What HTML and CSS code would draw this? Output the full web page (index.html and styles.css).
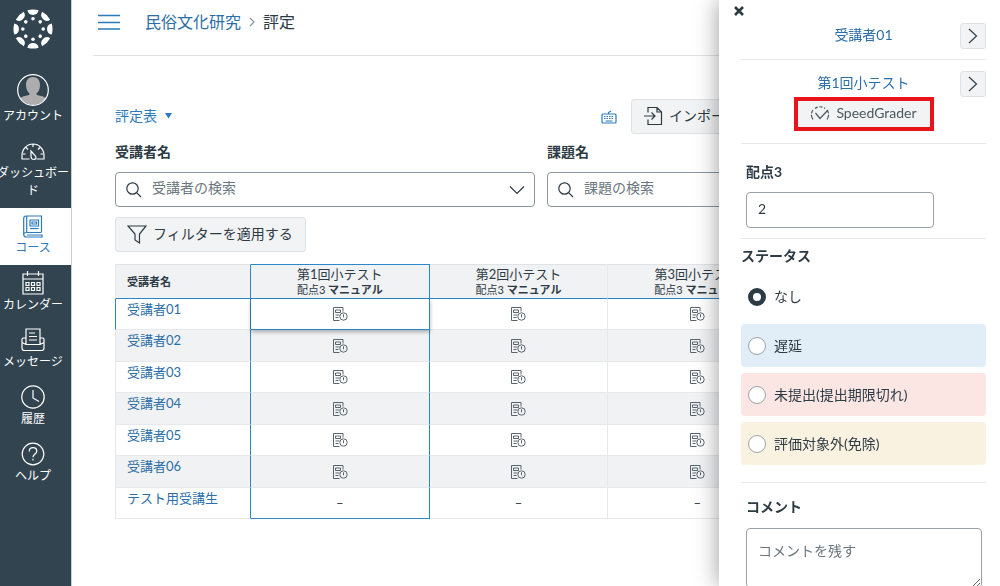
FILE: index.html
```html
<!DOCTYPE html>
<html lang="ja">
<head>
    <meta charset="UTF-8">
    <meta name="viewport" content="width=device-width, initial-scale=1.0">
    <title>評定表</title>
    <link rel="stylesheet" href="styles.css">
</head>
<body>

    <!-- Shared icons -->
    <svg class="sprite" aria-hidden="true">
        <symbol id="icon-search" viewBox="0 0 16 16">
            <circle cx="6.5" cy="6.5" r="5.7"/><path d="M10.6 10.6L15 15"/>
        </symbol>
        <symbol id="icon-next" viewBox="0 0 10 16">
            <path d="M1 1l7.5 7L1 15"/>
        </symbol>
        <symbol id="icon-quiz" viewBox="0 0 16 16">
            <path d="M7.5 14.500H1.500V1.500h9.500v4M3.500 4h5v2.500h-5zM3.500 9h4M3.500 11.500h3"/>
            <circle cx="11.5" cy="10.5" r="3.700"/><path d="M11.500 8.300v3"/>
        </symbol>
    </svg>

    <div class="app">
        <nav class="sidebar">
            <a href="#" class="logo" aria-label="Canvas">
                <svg viewBox="-20 -20 40 40" width="40" height="40">
                    <defs>
                        <g id="logo-part">
                            <path d="M-5.6 -18.7A19.5 19.5 0 0 1 5.6 -18.7A5.7 5.7 0 0 1 -5.6 -18.7Z"/>
                            <circle cx="0" cy="-10.2" r="1.8"/>
                        </g>
                    </defs>
                    <use href="#logo-part"/>
                    <use href="#logo-part" transform="rotate(45)"/>
                    <use href="#logo-part" transform="rotate(90)"/>
                    <use href="#logo-part" transform="rotate(135)"/>
                    <use href="#logo-part" transform="rotate(180)"/>
                    <use href="#logo-part" transform="rotate(225)"/>
                    <use href="#logo-part" transform="rotate(270)"/>
                    <use href="#logo-part" transform="rotate(315)"/>
                </svg>
            </a>
            <a href="#" class="nav-item">
                <svg class="avatar" viewBox="0 0 32 32" width="32" height="32">
                    <defs><clipPath id="avatar-clip"><circle cx="16" cy="16" r="15"/></clipPath></defs>
                    <g clip-path="url(#avatar-clip)">
                        <path class="avatar-person" d="M16 3c4.500 0 7 3 7 8 0 4-1.500 7-3.500 8.500 0 1.500.5 1.500 5 2.500 4 1 6.500 3 7.500 10H0c1-7 3.500-9 7.500-10 4.500-1 5-1 5-2.500C10.500 18 9 15 9 11c0-5 2.500-8 7-8z"/>
                    </g>
                    <circle cx="16" cy="16" r="15.300"/>
                </svg>
                <span>アカウント</span>
            </a>
            <a href="#" class="nav-item">
                <svg viewBox="0 0 24 24" width="24" height="24">
                    <path d="M8.500 20H1v-3.500C1 10 6 5 12 5s11 5 11 11.500V20h-7.500M12 5v3M5 8.500l2 2M19 8.500l-2 2M2 15h2.500M19.500 15H22"/>
                    <path d="M10 12l4.500 5c1 1.500.3 3.500-1.500 3.500s-2.800-1-3-2.800z"/>
                </svg>
                <span>ダッシュボー<br>ド</span>
            </a>
            <a href="#" class="nav-item active">
                <svg viewBox="0 0 24 24" width="24" height="24">
                    <path d="M20 18.500H5.500c-2 0-2.800 1-2.800 2s.8 2.500 2.800 2.500H21v-2H6M20.500 18.500V2H5C3.500 2 2.700 3 2.700 4.500v16M5.700 2v16.500M9 6h8.500v6H9zM11 8h4.500v2H11z"/>
                    <path d="M9 14.500h8.500"/>
                </svg>
                <span>コース</span>
            </a>
            <a href="#" class="nav-item">
                <svg viewBox="0 0 24 24" width="24" height="24">
                    <path d="M2 3h20v20H2zM2 8h20M6.500 0v5M17.500 0v5M5 11.500h3v3H5zM10.500 11.500h3v3h-3zM16 11.500h3v3h-3zM5 16.500h3v3H5zM10.500 16.500h3v3h-3zM16 16.500h3v3h-3z"/>
                </svg>
                <span>カレンダー</span>
            </a>
            <a href="#" class="nav-item">
                <svg viewBox="0 0 24 24" width="24" height="24">
                    <path d="M5 16V1h14v15M8 5h6M8 8.500h8M8 12h8M5 10H2l-1 1v9c0 1.500 1 2.500 2.500 2.500h17c1.500 0 2.500-1 2.500-2.500v-9l-1-1h-3M1 14.500l4 2h14l4-2"/>
                </svg>
                <span>メッセージ</span>
            </a>
            <a href="#" class="nav-item">
                <svg viewBox="0 0 24 24" width="24" height="24">
                    <circle cx="12" cy="12" r="11.200"/><path d="M12 5v8l6 3.500"/>
                </svg>
                <span>履歴</span>
            </a>
            <a href="#" class="nav-item">
                <svg viewBox="0 0 24 24" width="24" height="24">
                    <circle cx="12" cy="12" r="10.800"/><path d="M8.300 9.500C8.300 7 10 5.700 12 5.700S15.800 7 15.800 9.200c0 2.800-3.800 2.800-3.800 6M12 16.800v1.700"/>
                </svg>
                <span>ヘルプ</span>
            </a>
        </nav>

        <main class="content">
            <header class="page-header">
                <button class="menu-button" aria-label="メニュー">
                    <svg viewBox="0 0 24 16" width="24" height="16"><path d="M1 1.500h22M1 8.500h22M1 15h22"/></svg>
                </button>
                <a href="#">民俗文化研究</a>
                <svg class="crumb-arrow" viewBox="0 0 6 10" width="6" height="10"><path d="M1 1l4 4-4 4"/></svg>
                <span>評定</span>
            </header>

            <div class="gradebook">
                <div class="toolbar">
                    <button class="view-menu">評定表
                        <svg viewBox="0 0 8 6" width="8" height="6"><path d="M0 0h7L3.500 5.500z"/></svg>
                    </button>
                    <div class="toolbar-actions">
                        <button class="keyboard-button" aria-label="キーボードショートカット">
                            <svg viewBox="0 0 16 14" width="16" height="14">
                                <rect x="1" y="4" width="14" height="9" rx="1"/>
                                <path d="M3 6.500h10M3 8.500h10" stroke-dasharray="1.500 1"/><path d="M4.500 11h7M7.500 4V2.500L10 1"/>
                            </svg>
                        </button>
                        <button class="button">
                            <svg viewBox="0 0 20 20" width="20" height="20">
                                <path d="M5 6.500V1.500h9l4.500 4.500v12.500H5v-5M14 1.500V6h4.500M1 10h10.500M8.500 6.500L12 10l-3.500 3.500"/>
                            </svg>
                            インポート
                        </button>
                    </div>
                </div>

                <div class="search-row">
                    <div class="field">
                        <label for="student-search">受講者名</label>
                        <div class="search-box">
                            <svg width="16" height="16"><use href="#icon-search"/></svg>
                            <input type="text" id="student-search" placeholder="受講者の検索">
                            <svg viewBox="0 0 16 10" width="16" height="10"><path d="M1 1.500l7 7 7-7"/></svg>
                        </div>
                    </div>
                    <div class="field">
                        <label for="assignment-search">課題名</label>
                        <div class="search-box">
                            <svg width="16" height="16"><use href="#icon-search"/></svg>
                            <input type="text" id="assignment-search" placeholder="課題の検索">
                            <svg viewBox="0 0 16 10" width="16" height="10"><path d="M1 1.500l7 7 7-7"/></svg>
                        </div>
                    </div>
                </div>

                <button class="button">
                    <svg viewBox="0 0 20 20" width="20" height="20">
                        <path d="M1 2h18l-6.500 8v9L8 16v-6z"/>
                    </svg>
                    フィルターを適用する
                </button>

                <table class="grades">
                    <thead>
                        <tr>
                            <th class="name">受講者名</th>
                            <th class="selected"><span>第1回小テスト</span><small>配点3 <b>マニュアル</b></small></th>
                            <th><span>第2回小テスト</span><small>配点3 <b>マニュアル</b></small></th>
                            <th><span>第3回小テスト</span><small>配点3 <b>マニュアル</b></small></th>
                        </tr>
                    </thead>
                    <tbody>
                        <tr class="current">
                            <td class="name"><a href="#">受講者01</a></td>
                            <td class="selected"><svg><use href="#icon-quiz"/></svg></td>
                            <td><svg><use href="#icon-quiz"/></svg></td>
                            <td><svg><use href="#icon-quiz"/></svg></td>
                        </tr>
                        <tr>
                            <td class="name"><a href="#">受講者02</a></td>
                            <td class="selected"><svg><use href="#icon-quiz"/></svg></td>
                            <td><svg><use href="#icon-quiz"/></svg></td>
                            <td><svg><use href="#icon-quiz"/></svg></td>
                        </tr>
                        <tr>
                            <td class="name"><a href="#">受講者03</a></td>
                            <td class="selected"><svg><use href="#icon-quiz"/></svg></td>
                            <td><svg><use href="#icon-quiz"/></svg></td>
                            <td><svg><use href="#icon-quiz"/></svg></td>
                        </tr>
                        <tr>
                            <td class="name"><a href="#">受講者04</a></td>
                            <td class="selected"><svg><use href="#icon-quiz"/></svg></td>
                            <td><svg><use href="#icon-quiz"/></svg></td>
                            <td><svg><use href="#icon-quiz"/></svg></td>
                        </tr>
                        <tr>
                            <td class="name"><a href="#">受講者05</a></td>
                            <td class="selected"><svg><use href="#icon-quiz"/></svg></td>
                            <td><svg><use href="#icon-quiz"/></svg></td>
                            <td><svg><use href="#icon-quiz"/></svg></td>
                        </tr>
                        <tr>
                            <td class="name"><a href="#">受講者06</a></td>
                            <td class="selected"><svg><use href="#icon-quiz"/></svg></td>
                            <td><svg><use href="#icon-quiz"/></svg></td>
                            <td><svg><use href="#icon-quiz"/></svg></td>
                        </tr>
                        <tr>
                            <td class="name"><a href="#">テスト用受講生</a></td>
                            <td class="selected">–</td>
                            <td>–</td>
                            <td>–</td>
                        </tr>
                    </tbody>
                </table>
            </div>
        </main>
    </div>

    <!-- Grade detail tray -->
    <aside class="tray">
        <button class="tray-close" aria-label="閉じる">
            <svg viewBox="0 0 10 10" width="10" height="10"><path d="M1 1l8 8M9 1L1 9"/></svg>
        </button>

        <div class="tray-nav">
            <a href="#">受講者01</a>
            <button class="next-button" aria-label="次の受講者"><svg width="10" height="16"><use href="#icon-next"/></svg></button>
        </div>

        <div class="tray-section">
            <div class="tray-nav">
                <a href="#">第1回小テスト</a>
                <button class="next-button" aria-label="次の課題"><svg width="10" height="16"><use href="#icon-next"/></svg></button>
            </div>
            <button class="speedgrader">
                <svg viewBox="0 0 20 16" width="20" height="16">
                    <path d="M3 14.500C.8 11.500.8 8 3 5M17 14.500c2.200-3 2.200-6.500 0-9.500" stroke-dasharray="5 1.500"/>
                    <path d="M5 3.500C8 1.200 12 1.200 15 3.500" stroke-dasharray="3 1.800"/>
                    <path d="M5.500 8l4.500 5.500L18 5"/>
                </svg>
                SpeedGrader
            </button>
        </div>

        <div class="tray-section score">
            <label for="score">配点3</label>
            <input type="text" id="score" value="2">
        </div>

        <fieldset class="tray-section status">
            <legend>ステータス</legend>
            <label class="option"><input type="radio" name="status" checked>なし</label>
            <label class="option late"><input type="radio" name="status">遅延</label>
            <label class="option missing"><input type="radio" name="status">未提出(提出期限切れ)</label>
            <label class="option excused"><input type="radio" name="status">評価対象外(免除)</label>
        </fieldset>

        <div class="tray-section comment">
            <label for="comment">コメント</label>
            <textarea id="comment" placeholder="コメントを残す"></textarea>
        </div>
    </aside>

</body>
</html>
```
FILE: styles.css
```css
* {
    box-sizing: border-box;
}
body {
    margin: 0;
    font-family: Lato, "Noto Sans CJK JP", sans-serif;
    font-size: 14px;
    line-height: 20px;
    color: #2d3b45;
    background: white;
    overflow: hidden;
}
a {
    color: #2b6ea8;
    text-decoration: none;
}
button, input, textarea {
    font: inherit;
    color: inherit;
}
button {
    cursor: pointer;
}
svg {
    display: block;
    flex: none;
    fill: none;
    stroke: currentColor;
    stroke-width: 1.2;
}
.sprite {
    position: absolute;
    width: 0;
    height: 0;
}
.app {
    display: flex;
    min-height: 100vh;
}

/* Global navigation */
.sidebar {
    flex: 0 0 72px;
    min-width: 0;
    background: #324450;
    border-right: 1px solid #c7cdd1;
}
.logo {
    display: flex;
    align-items: center;
    justify-content: center;
    height: 68px;
    padding: 0 5px 10px 0;
    color: white;
}
.logo svg {
    fill: white;
    stroke: none;
}
.nav-item {
    display: flex;
    flex-direction: column;
    align-items: center;
    gap: 1px;
    padding: 6px 5px 8px 0;
    font-size: 12px;
    line-height: 18px;
    text-align: center;
    white-space: nowrap;
    color: white;
}
.nav-item.active {
    background: white;
    color: #2b7abc;
}
.avatar-person {
    fill: #adadad;
    stroke: none;
}

/* Page header */
.content {
    flex: 1;
    min-width: 0;
    padding-left: 21px;
}
.page-header {
    display: flex;
    align-items: center;
    gap: 8px;
    height: 56px;
    padding: 0 4px 11px;
    border-bottom: 1px solid #e0e3e5;
    font-size: 16px;
}
.menu-button {
    padding: 0;
    margin-right: 16px;
    border: 0;
    background: none;
    color: #2b7abc;
}
.menu-button svg {
    stroke-width: 1.6;
}
.crumb-arrow {
    color: #8b969e;
}

/* Gradebook */
.gradebook {
    padding: 43px 33px 0 22px;
}
.toolbar {
    display: flex;
    justify-content: space-between;
    align-items: center;
}
.toolbar-actions {
    display: flex;
    align-items: center;
    gap: 14px;
    flex: 0 0 366px;
}
.view-menu, .keyboard-button {
    display: flex;
    align-items: center;
    gap: 8px;
    padding: 0;
    border: 0;
    background: none;
    color: #2b7abc;
}
.view-menu {
    padding-bottom: 2px;
}
.view-menu svg {
    fill: currentColor;
    stroke: none;
}
.button {
    display: flex;
    align-items: center;
    gap: 6px;
    height: 35px;
    padding: 0 12px 2px 11px;
    border: 1px solid #dfe2e4;
    border-radius: 3px;
    background: #f2f3f4;
}
.search-row {
    display: grid;
    grid-template-columns: 1fr 1fr;
    gap: 12px;
    margin: 8px 0 10px;
}
.field label {
    display: block;
    font-weight: bold;
}
.search-box {
    display: flex;
    align-items: center;
    gap: 10px;
    height: 35px;
    margin-top: 10px;
    padding: 0 9px 0 10px;
    border: 1px solid #8b969e;
    border-radius: 4px;
}
.search-box input {
    flex: 1;
    min-width: 0;
    padding: 0 0 3px;
    border: 0;
    outline: none;
    background: none;
}
::placeholder {
    color: #6b7780;
    opacity: 1;
}

/* Grade table */
.grades {
    width: 672px;
    margin-top: 12px;
    table-layout: fixed;
    border-collapse: separate;
    border-spacing: 0;
    font-size: 13px;
}
.grades th, .grades td {
    padding: 0;
    border-right: 1px solid #e6e8ea;
    border-bottom: 1px solid #e6e8ea;
    text-align: center;
}
.grades th {
    height: 35px;
    background: #f1f2f4;
    border-top: 1px solid #e0e3e5;
    border-bottom-color: #2b87c8;
    font-weight: normal;
}
.grades th span, .grades th small {
    display: block;
    font-size: 13px;
    line-height: 16px;
}
.grades th small {
    font-size: 11px;
}
.grades .name {
    width: 136px;
    padding-left: 11px;
    border-left: 1px solid #e6e8ea;
    text-align: left;
}
.grades th.name {
    font-size: 11px;
    font-weight: bold;
}
.grades td {
    height: 31px;
}
.grades tr:nth-child(even) td {
    height: 32px;
    background: #f1f2f4;
}
.grades td.name {
    vertical-align: top;
}
.grades td svg {
    width: 16px;
    height: 16px;
    margin: 0 auto;
    stroke: #59656e;
    stroke-width: 1;
}
.grades .name:first-child, .grades .selected {
    border-right-color: #2b87c8;
}
.grades th.selected {
    border-top-color: #2b87c8;
}
.grades tr:last-child td.selected {
    border-bottom-color: #2b87c8;
}
.grades .current .name {
    border-left-color: #2b87c8;
}
.grades .current .selected {
    position: relative;
    border-bottom-color: #2b87c8;
    box-shadow: 0 2px 4px rgba(0, 0, 0, 0.3);
}

/* Tray */
.tray {
    position: fixed;
    top: 0;
    right: 0;
    bottom: 0;
    width: 281px;
    padding: 6px 14px 0 22px;
    overflow: hidden;
    background: white;
    box-shadow: 0 0 22px rgba(0, 0, 0, 0.4);
}
.tray-close {
    display: block;
    margin-left: -7px;
    padding: 0;
    border: 0;
    background: none;
}
.tray-close svg {
    stroke-width: 2.6;
}
.tray-nav {
    display: grid;
    grid-template-columns: 26px 1fr 26px;
    margin-top: 7px;
}
.tray-nav a {
    grid-column: 2;
    padding-top: 2px;
    text-align: center;
}
.next-button {
    display: flex;
    align-items: center;
    justify-content: center;
    height: 26px;
    padding: 0;
    border: 1px solid #dfe2e4;
    border-radius: 3px;
    background: #f2f3f4;
}
.tray-section {
    margin-top: 10px;
    border-top: 1px solid #e6e8ea;
}
.tray-section .tray-nav {
    margin-top: 11px;
}
.speedgrader {
    display: flex;
    align-items: center;
    justify-content: center;
    gap: 6px;
    width: 140px;
    height: 34px;
    margin: 0 auto 12px;
    padding: 0 0 2px;
    border: 4px solid #e8131b;
    background: #f2f3f4;
    color: #4a5861;
}
.score, .comment {
    padding: 18px 4px 0 5px;
}
.score label, .comment label {
    display: block;
    font-weight: bold;
}
.score input, .comment textarea {
    display: block;
    border: 1px solid #9aa3aa;
    border-radius: 4px;
    padding: 0 11px 3px;
}
.score input {
    width: 188px;
    height: 36px;
    margin-top: 10px;
}
.status {
    display: flex;
    flex-direction: column;
    gap: 6px;
    padding: 7px 0 0;
    border-width: 1px 0 0;
    margin-left: 0;
    margin-right: 0;
}
.status legend {
    float: left;
    margin-bottom: 3px;
    padding: 0;
    font-weight: bold;
}
.option {
    display: flex;
    align-items: center;
    gap: 8px;
    height: 43px;
    padding: 0 7px;
    border-radius: 4px;
}
.option input {
    appearance: none;
    width: 18px;
    height: 18px;
    margin: 0;
    border: 1px solid #9aa3aa;
    border-radius: 50%;
    background: white;
}
.option input:checked {
    border: 5px solid #2d3b45;
}
.late {
    background: #e1eef8;
}
.missing {
    background: #fbe6e4;
}
.excused {
    background: #faf2e0;
}
.comment {
    margin-top: 17px;
    padding-top: 14px;
}
.comment textarea {
    width: 100%;
    height: 60px;
    margin-top: 11px;
    padding: 12px 11px;
}
```
